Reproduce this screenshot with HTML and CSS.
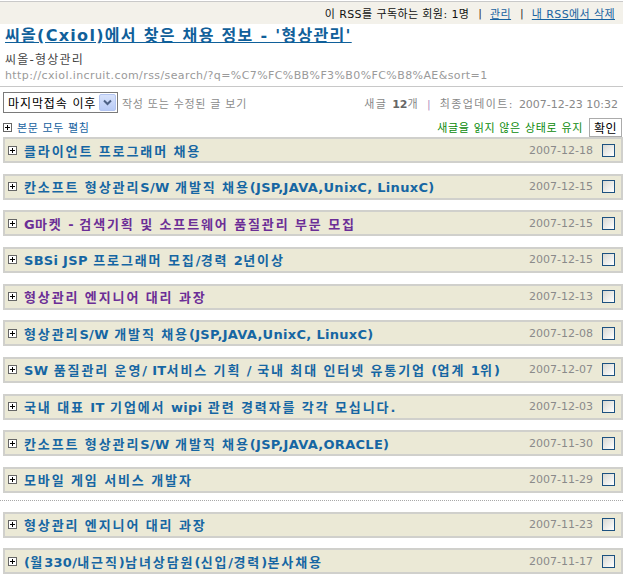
FILE: index.html
```html
<!DOCTYPE html>
<html lang="ko">
<head>
<meta charset="utf-8">
<title>씨올 RSS</title>
<link rel="stylesheet" href="styles.css">
</head>
<body>
<div class="topbar">
  <span>이 RSS를 구독하는 회원: 1명</span>
  <span class="sep">|</span>
  <a href="#" class="tlink">관리</a>
  <span class="sep">|</span>
  <a href="#" class="tlink">내 RSS에서 삭제</a>
</div>

<div class="head">
  <a href="#" class="title">씨올(Cxiol)에서 찾은 채용 정보 - '형상관리'</a>
  <div class="sub">씨올-형상관리</div>
  <div class="url">http://cxiol.incruit.com/rss/search/?q=%C7%FC%BB%F3%B0%FC%B8%AE&amp;sort=1</div>
</div>

<div class="toolbar">
  <div class="filter">
    <div class="select">
      <span class="select-text">마지막접속 이후</span>
      <span class="select-btn">
        <svg width="9" height="7" viewBox="0 0 9 7"><path d="M1 1.5 L4.5 5 L8 1.5" fill="none" stroke="#4d6185" stroke-width="2"/></svg>
      </span>
    </div>
    <span class="hint">작성 또는 수정된 글 보기</span>
  </div>
  <div class="stats">새글 <b class="num">12</b>개<span class="psep">|</span>최종업데이트: <span class="num">2007-12-23 10:32</span></div>
</div>

<div class="actions">
  <a href="#" class="expand"><span class="plus"><svg width="9" height="9" viewBox="0 0 9 9"><rect x="0.5" y="0.5" width="8" height="8" fill="#fff" stroke="#666"/><path d="M2 4.5 H7 M4.5 2 V7" stroke="#000"/></svg></span>본문 모두 펼침</a>
  <div class="keep"><span>새글을 읽지 않은 상태로 유지</span><button class="ok">확인</button></div>
</div>

<div class="list">
  <div class="row"><span class="plus"><svg width="9" height="9" viewBox="0 0 9 9"><rect x="0.5" y="0.5" width="8" height="8" fill="#fff" stroke="#666"/><path d="M2 4.5 H7 M4.5 2 V7" stroke="#000"/></svg></span><a href="#" class="rt">클라이언트 프로그래머 채용</a><span class="date">2007-12-18</span><span class="chk"></span></div>
  <div class="row"><span class="plus"><svg width="9" height="9" viewBox="0 0 9 9"><rect x="0.5" y="0.5" width="8" height="8" fill="#fff" stroke="#666"/><path d="M2 4.5 H7 M4.5 2 V7" stroke="#000"/></svg></span><a href="#" class="rt">칸소프트 형상관리<span class="en">S/W</span> 개발직 채용<span class="en">(JSP,JAVA,UnixC, LinuxC)</span></a><span class="date">2007-12-15</span><span class="chk"></span></div>
  <div class="row"><span class="plus"><svg width="9" height="9" viewBox="0 0 9 9"><rect x="0.5" y="0.5" width="8" height="8" fill="#fff" stroke="#666"/><path d="M2 4.5 H7 M4.5 2 V7" stroke="#000"/></svg></span><a href="#" class="rt visited"><span class="en">G</span>마켓 <span class="en">-</span> 검색기획 및 소프트웨어 품질관리 부문 모집</a><span class="date">2007-12-15</span><span class="chk"></span></div>
  <div class="row"><span class="plus"><svg width="9" height="9" viewBox="0 0 9 9"><rect x="0.5" y="0.5" width="8" height="8" fill="#fff" stroke="#666"/><path d="M2 4.5 H7 M4.5 2 V7" stroke="#000"/></svg></span><a href="#" class="rt"><span class="en">SBSi JSP</span> 프로그래머 모집<span class="en">/</span>경력 <span class="en">2</span>년이상</a><span class="date">2007-12-15</span><span class="chk"></span></div>
  <div class="row"><span class="plus"><svg width="9" height="9" viewBox="0 0 9 9"><rect x="0.5" y="0.5" width="8" height="8" fill="#fff" stroke="#666"/><path d="M2 4.5 H7 M4.5 2 V7" stroke="#000"/></svg></span><a href="#" class="rt visited">형상관리 엔지니어 대리 과장</a><span class="date">2007-12-13</span><span class="chk"></span></div>
  <div class="row"><span class="plus"><svg width="9" height="9" viewBox="0 0 9 9"><rect x="0.5" y="0.5" width="8" height="8" fill="#fff" stroke="#666"/><path d="M2 4.5 H7 M4.5 2 V7" stroke="#000"/></svg></span><a href="#" class="rt">형상관리<span class="en">S/W</span> 개발직 채용<span class="en">(JSP,JAVA,UnixC, LinuxC)</span></a><span class="date">2007-12-08</span><span class="chk"></span></div>
  <div class="row"><span class="plus"><svg width="9" height="9" viewBox="0 0 9 9"><rect x="0.5" y="0.5" width="8" height="8" fill="#fff" stroke="#666"/><path d="M2 4.5 H7 M4.5 2 V7" stroke="#000"/></svg></span><a href="#" class="rt"><span class="en">SW</span> 품질관리 운영<span class="en">/ IT</span>서비스 기획 <span class="en">/</span> 국내 최대 인터넷 유통기업 <span class="en">(</span>업계 <span class="en">1</span>위<span class="en">)</span></a><span class="date">2007-12-07</span><span class="chk"></span></div>
  <div class="row"><span class="plus"><svg width="9" height="9" viewBox="0 0 9 9"><rect x="0.5" y="0.5" width="8" height="8" fill="#fff" stroke="#666"/><path d="M2 4.5 H7 M4.5 2 V7" stroke="#000"/></svg></span><a href="#" class="rt">국내 대표 <span class="en">IT</span> 기업에서 <span class="en">wipi</span> 관련 경력자를 각각 모십니다<span class="en">.</span></a><span class="date">2007-12-03</span><span class="chk"></span></div>
  <div class="row"><span class="plus"><svg width="9" height="9" viewBox="0 0 9 9"><rect x="0.5" y="0.5" width="8" height="8" fill="#fff" stroke="#666"/><path d="M2 4.5 H7 M4.5 2 V7" stroke="#000"/></svg></span><a href="#" class="rt">칸소프트 형상관리<span class="en">S/W</span> 개발직 채용<span class="en">(JSP,JAVA,ORACLE)</span></a><span class="date">2007-11-30</span><span class="chk"></span></div>
  <div class="row"><span class="plus"><svg width="9" height="9" viewBox="0 0 9 9"><rect x="0.5" y="0.5" width="8" height="8" fill="#fff" stroke="#666"/><path d="M2 4.5 H7 M4.5 2 V7" stroke="#000"/></svg></span><a href="#" class="rt">모바일 게임 서비스 개발자</a><span class="date">2007-11-29</span><span class="chk"></span></div>
  <div class="divider"></div>
  <div class="row"><span class="plus"><svg width="9" height="9" viewBox="0 0 9 9"><rect x="0.5" y="0.5" width="8" height="8" fill="#fff" stroke="#666"/><path d="M2 4.5 H7 M4.5 2 V7" stroke="#000"/></svg></span><a href="#" class="rt">형상관리 엔지니어 대리 과장</a><span class="date">2007-11-23</span><span class="chk"></span></div>
  <div class="row"><span class="plus"><svg width="9" height="9" viewBox="0 0 9 9"><rect x="0.5" y="0.5" width="8" height="8" fill="#fff" stroke="#666"/><path d="M2 4.5 H7 M4.5 2 V7" stroke="#000"/></svg></span><a href="#" class="rt"><span class="en">(</span>월<span class="en">330/</span>내근직<span class="en">)</span>남녀상담원<span class="en">(</span>신입<span class="en">/</span>경력<span class="en">)</span>본사채용</a><span class="date">2007-11-17</span><span class="chk"></span></div>
</div>
</body>
</html>
```

FILE: styles.css
```css
* { box-sizing: border-box; }
html, body { margin: 0; padding: 0; background: #fff; }
body {
  width: 623px;
  font-family: "DejaVu Sans", "Noto Sans CJK KR", sans-serif;
  font-size: 11px;
  color: #222;
  overflow: hidden;
}
a { text-decoration: none; }

.topbar {
  margin-top: 1px;
  height: 23px;
  border-top: 1px solid #c9c9c9;
  background: #f3f1ea;
  display: flex;
  justify-content: flex-end;
  align-items: center;
  padding-right: 8px;
  font-size: 11px;
  letter-spacing: 0.4px;
  color: #111;
}
.topbar .sep { margin: 0 8px 0 9px; color: #333; letter-spacing: 0; }
.tlink { color: #1762a0; text-decoration: underline; }

.head {
  padding: 1px 0 2px 5px;
  border-bottom: 1px solid #c8c8c8;
}
.title {
  display: block;
  font-size: 16px;
  font-weight: bold;
  line-height: 22px;
  color: #10609a;
  text-decoration: underline;
  letter-spacing: 1.3px;
}
.sub {
  margin-top: 5px;
  font-size: 12px;
  line-height: 16px;
  letter-spacing: 1.2px;
  color: #444;
}
.url {
  font-size: 11px;
  line-height: 16px;
  letter-spacing: 0.4px;
  color: #9a9a9a;
}

.toolbar {
  display: flex;
  justify-content: space-between;
  align-items: center;
  padding: 5px 5px 0 3px;
}
.filter { display: flex; align-items: center; }
.select {
  width: 115px;
  height: 21px;
  border: 1px solid #7a7a7a;
  background: #fff;
  display: flex;
  align-items: center;
  justify-content: space-between;
  padding: 1px;
}
.select-text {
  padding-left: 3px;
  font-size: 12px;
  color: #000;
  letter-spacing: 0.9px;
}
.select-btn {
  width: 17px;
  height: 17px;
  border: 1px solid #b3c5f2;
  border-radius: 2px;
  background: linear-gradient(#d7e2fb, #b9cbf6);
  display: flex;
  align-items: center;
  justify-content: center;
}
.hint {
  margin-left: 4px;
  color: #8c8c8c;
  font-size: 11px;
  letter-spacing: 0.7px;
}
.stats {
  color: #888;
  font-size: 11px;
  letter-spacing: 1.4px;
}
.stats .num { letter-spacing: 0; }
.stats b { color: #666; }
.psep { color: #b48fbf; margin: 0 9px 0 8px; letter-spacing: 0; }

.actions {
  display: flex;
  justify-content: space-between;
  align-items: center;
  height: 20px;
  margin-top: 4px;
  padding-left: 3px;
  padding-right: 1px;
}
.expand {
  display: flex;
  align-items: center;
  color: #1762a0;
  font-size: 11px;
  letter-spacing: 0.6px;
}
.expand .plus { margin-right: 5px; }
.plus { display: flex; width: 9px; height: 9px; }
.keep { display: flex; align-items: center; color: #0a8a0a; font-size: 11px; letter-spacing: 0.65px; }
.ok {
  margin-left: 6px;
  width: 33px;
  height: 19px;
  padding: 0;
  border: 1px solid #ababab;
  background: #fff;
  font-family: "Noto Sans CJK KR", sans-serif;
  font-size: 12px;
  color: #000;
  letter-spacing: 0.5px;
}

.list {
  margin-top: 0;
  padding-left: 3px;
}
.row {
  height: 26px;
  margin-bottom: 10.67px;
  border: 2px solid #d0d0cc;
  background: #ebe9d6;
  display: flex;
  align-items: center;
  padding: 0 6px 0 3px;
}
.row .plus { margin-right: 7px; }
.rt {
  flex: 1;
  font-size: 13px;
  font-weight: bold;
  letter-spacing: 1.9px;
  word-spacing: -1px;
  color: #1666a3;
  white-space: nowrap;
}
.rt .en { letter-spacing: 0.3px; word-spacing: 0; }
.rt.visited { color: #6b2e96; }
.date {
  color: #8a8a8a;
  font-size: 11px;
  margin-right: 9px;
}
.chk {
  width: 13px;
  height: 13px;
  border: 1px solid #1c5180;
  background: linear-gradient(135deg, #d8d8d2, #ffffff);
}
.divider {
  height: 0;
  border-top: 1px dotted #a8a8a8;
  margin: -4px 0 11px -3px;
}
```
